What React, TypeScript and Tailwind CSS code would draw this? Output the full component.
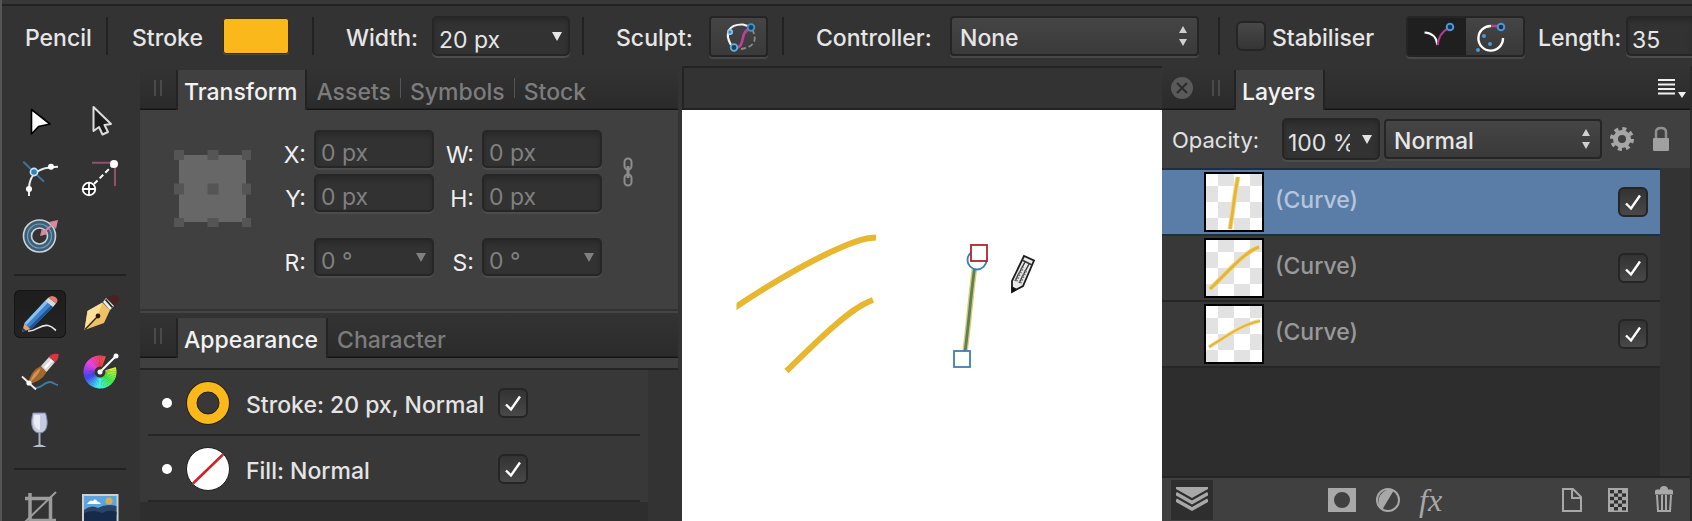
import type { ReactNode } from "react";

const fieldBox =
  "flex items-center rounded-[5px] border-2 border-[#262626] bg-[#323232] shadow-[0_2px_0_#4c4c4c,inset_0_3px_4px_#292929]";
const raisedBox =
  "rounded-[4px] border-2 border-[#252525] bg-linear-to-b from-[#454545] to-[#3a3a3a] shadow-[0_2px_0_#484848]";

function DownArrow() {
  return (
    <svg viewBox="0 0 10 9" className="h-[9px] w-[10px] shrink-0" aria-hidden="true">
      <path d="M0 0H10L5 9Z" fill="currentColor" />
    </svg>
  );
}

function Combo({ id, value, className }: { id: string; value: string; className: string }) {
  return (
    <div className={`${fieldBox} ${className}`}>
      <input id={id} defaultValue={value} className="min-w-0 flex-1 bg-transparent pt-2 outline-none" />
      <button type="button" aria-label="Choose value" className="shrink-0">
        <DownArrow />
      </button>
    </div>
  );
}

function Popup({ id, value, className, label }: { id: string; value: string; className: string; label?: string }) {
  return (
    <div className={`grid items-center ${raisedBox} ${className}`}>
      <select
        id={id}
        aria-label={label}
        className="col-start-1 row-start-1 h-full w-full appearance-none bg-transparent pt-1 pl-2 text-[#e6e6e6] outline-none"
      >
        <option>{value}</option>
      </select>
      <svg viewBox="0 0 8 20" className="pointer-events-none col-start-1 row-start-1 mr-[10px] h-5 w-2 justify-self-end" aria-hidden="true">
        <path d="M4 0L8 7H0ZM4 20L8 13H0Z" fill="#cfcfcf" />
      </svg>
    </div>
  );
}

function Tick({ id, label, checked }: { id: string; label?: string; checked: boolean }) {
  return (
    <span className="grid h-[30px] w-[30px] shrink-0">
      <input
        id={id}
        type="checkbox"
        aria-label={label}
        defaultChecked={checked}
        className="peer col-start-1 row-start-1 appearance-none rounded-[6px] border-2 border-[#252525] bg-linear-to-b from-[#484848] to-[#353535] checked:from-[#333333] checked:to-[#484848]"
      />
      <svg viewBox="0 0 30 30" className="pointer-events-none invisible col-start-1 row-start-1 peer-checked:visible" aria-hidden="true">
        <path d="M8 16.5L13 21.5L22 8.5" fill="none" stroke="#fff" strokeWidth="2.4" />
      </svg>
    </span>
  );
}

function Grip() {
  return <span className="block h-4 w-2 shrink-0 border-x-2 border-[#4a4a4a]" />;
}

function Tab({ active, children }: { active?: boolean; children: ReactNode }) {
  return active ? (
    <button
      type="button"
      role="tab"
      aria-selected="true"
      className="h-10 border-x-2 border-[#232323] bg-[#404040] pt-1 pr-2 pl-[6px] font-medium text-[#f2f2f2]"
    >
      {children}
    </button>
  ) : (
    <button type="button" role="tab" aria-selected="false" className="h-10 pt-1 font-medium text-[#7c7c7c]">
      {children}
    </button>
  );
}

function TabDivider() {
  return <span className="mx-[9px] mt-2 h-5 w-px self-start bg-[#555]" />;
}

function TabBar({ children }: { children: ReactNode }) {
  return (
    <div
      role="tablist"
      className="flex h-11 shrink-0 items-end bg-[linear-gradient(to_top,#151515_1px,#2b2b2b_2px,#333_100%)]"
    >
      {children}
    </div>
  );
}

function Tool({ label, active, children }: { label: string; active?: boolean; children: ReactNode }) {
  return (
    <button
      type="button"
      aria-label={label}
      className={`h-12 w-[52px] rounded-[6px] ${active ? "bg-linear-to-b from-[#1d1d1d] to-[#242424] shadow-[inset_0_0_0_1px_#161616]" : ""}`}
    >
      <svg viewBox="0 0 52 48" className="block h-12 w-[52px]" fill="none" aria-hidden="true">
        {children}
      </svg>
    </button>
  );
}

function ColourWheel() {
  const steps = Array.from({ length: 40 }, (_, i) => i);
  const sweep = 308 / steps.length;
  const point = (deg: number) => {
    const a = (deg * Math.PI) / 180;
    return `${26 + 11 * Math.cos(a)} ${24 + 11 * Math.sin(a)}`;
  };
  return (
    <>
      {steps.map((i) => {
        const start = i * sweep - 18;
        return (
          <path
            key={i}
            d={`M${point(start)}A11 11 0 0 1 ${point(start + sweep + 1)}`}
            stroke={`hsl(${70 + i * 7.6} 85% 60%)`}
            strokeWidth="11"
          />
        );
      })}
      <path d="M26 24L42 8" stroke="#fff" strokeWidth="2" />
      <circle cx="26" cy="24" r="2.5" fill="#fff" />
      <circle cx="42" cy="8" r="2.5" fill="#fff" />
    </>
  );
}

function Rail() {
  return (
    <nav aria-label="Tools" className="w-[140px] shrink-0 border-l-2 border-[#555] pt-[25px]">
      <div className="grid auto-rows-[58px] grid-cols-[60px_60px] place-items-center pl-2">
        <Tool label="Move">
          <path d="M17.5 13.5L36 28L24.5 30.5L17.5 38Z" fill="#fff" stroke="#000" strokeWidth="1.6" strokeLinejoin="round" />
        </Tool>
        <Tool label="Node select">
          <path d="M19.5 11V35L25 31L28.5 38.5L34 36L30.5 29L37 28Z" fill="#1c1c1c" stroke="#ddd" strokeWidth="2" strokeLinejoin="round" />
        </Tool>
        <Tool label="Node">
          <path d="M9.300 7.700L30 27.700" stroke="#3f7399" strokeWidth="2" />
          <path d="M15 42V35C15 22 22 12.700 44 12.700" stroke="#eee" strokeWidth="2" />
          <circle cx="15" cy="35" r="3" fill="#fff" />
          <circle cx="37" cy="12.700" r="3" fill="#fff" />
          <circle cx="20" cy="18" r="3.600" fill="#2d83bd" stroke="#cfe6f5" strokeWidth="1.600" />
        </Tool>
        <Tool label="Point transform">
          <path d="M18 8.700H41V32" stroke="#94506a" strokeWidth="2" />
          <path d="M20 30L38 12" stroke="#fff" strokeWidth="2" strokeDasharray="5 3" />
          <circle cx="40" cy="10" r="4" fill="#fff" />
          <circle cx="15" cy="35" r="6.300" fill="#222" stroke="#fff" strokeWidth="1.800" />
          <path d="M9 35H21M15 29V41" stroke="#fff" strokeWidth="1.800" />
        </Tool>
        <Tool label="Contour">
          <circle cx="25.500" cy="24" r="16" fill="#3d5f76" stroke="#ccd3d8" strokeWidth="1.600" />
          <circle cx="25.500" cy="24" r="12" stroke="#6fa0bd" strokeWidth="1.200" />
          <circle cx="25.500" cy="24" r="8" fill="#333" stroke="#ccd3d8" strokeWidth="1.600" />
          <path d="M30 20L39 12" stroke="#d8899d" strokeWidth="2" />
          <path d="M26 24L28 16L34 22ZM35 10L44 8L42 17Z" fill="#d8899d" />
        </Tool>
      </div>
      <hr className="my-[9px] mr-[14px] ml-3 h-[2px] border-0 bg-[#222]" />
      <div className="grid auto-rows-[58px] grid-cols-[60px_60px] place-items-center pl-2">
        <Tool label="Pencil" active>
          <path d="M14 41C22 42 26 34 34 35.500C39 36.500 41 40 42 40.500" stroke="#e8e8e8" strokeWidth="1.600" />
          <path d="M8 42L10.500 33L16.500 39Z" fill="#d9a777" />
          <path d="M8 42L9 38L12 40.500Z" fill="#1f3f66" />
          <path d="M10.500 33L31 11L39 17L17 39.500Z" fill="#3b82cf" />
          <path d="M10.500 33L31 11L33.500 13L12.500 35Z" fill="#8cc0ef" />
          <path d="M15 37.500L37 15.500L39 17L17 39.500Z" fill="#1e548f" />
          <path d="M31 11L34.500 7.500L42 13.500L39 17Z" fill="#d5dade" />
          <path d="M34.500 7.500Q38 4.500 42 7.500Q45 10.500 42 13.500Z" fill="#e47d70" />
        </Tool>
        <Tool label="Pen">
          <path d="M10.500 40L13.500 21L28.500 12.500L36 20L30 33Z" fill="#f0c067" />
          <path d="M10.500 40L13.500 21L28.500 12.500L23.500 26Z" fill="#fbdf9a" />
          <path d="M11 39.500L23 27" stroke="#3b2a14" strokeWidth="1.500" />
          <circle cx="24" cy="26" r="2.400" fill="#2a1d10" />
          <path d="M29 12L32 8L40 16L36 20Z" fill="#eee" />
          <path d="M31.500 9.500L38.500 17.500" stroke="#222" strokeWidth="1.800" />
          <path d="M33 8Q37 4 44 6Q47 11 40.500 15.500Z" fill="#4b211d" />
        </Tool>
        <Tool label="Vector brush">
          <path d="M20 40C27 41 30 34 36 34C40 34 41 37 44 37" stroke="#3d7ba5" strokeWidth="1.800" />
          <path d="M14 36Q17 22 27 18Q33 21 32 25Q27 34 14 36Z" fill="#a5662c" />
          <path d="M16 34Q19 24 27 20Q24 28 16 34Z" fill="#d1945a" />
          <path d="M27 18L35 9L41 14L32.500 24Z" fill="#d9d9d9" />
          <path d="M31 20L38 12" stroke="#fff" strokeWidth="2" />
          <path d="M35 9Q38 5 44.500 6Q45 11 41 14Z" fill="#dc3540" />
          <path d="M8 28.500L22 41.500" stroke="#eee" strokeWidth="1.800" />
          <circle cx="15" cy="35" r="2.600" fill="#fff" />
        </Tool>
        <Tool label="Fill">
          <ColourWheel />
        </Tool>
        <Tool label="Transparency">
          <path d="M19 7H31.500C35 18 33 27 25.500 27S16 18 19 7Z" fill="#c7cbe0" stroke="#8089a5" strokeWidth="1" />
          <path d="M20.500 9H26V24C21 23 18 17 20.500 9Z" fill="#e9ebf6" />
          <path d="M25.500 27V39" stroke="#a9b0c5" strokeWidth="2" />
          <path d="M18.500 41Q25.500 36 32.500 41Z" fill="#b9bfd1" />
        </Tool>
      </div>
      <hr className="my-[9px] mr-[14px] ml-3 h-[2px] border-0 bg-[#222]" />
      <div className="grid auto-rows-[58px] grid-cols-[60px_60px] place-items-center pl-2">
        <Tool label="Vector crop">
          <path d="M11 14.500H36.500V42M16 9V36.500H42" stroke="#9c9c9c" strokeWidth="3.500" />
          <path d="M11 38L42 8" stroke="#9c9c9c" strokeWidth="2" />
        </Tool>
        <Tool label="Place image">
          <path d="M9 11H43.500V38H9Z" fill="#5ba4dd" stroke="#cfcfcf" strokeWidth="2" />
          <path d="M10 26Q17 20 24 24Q32 19 42.500 22V31H10Z" fill="#2a4568" />
          <path d="M10 29Q20 25 28 29Q36 25 42.500 28V37H10Z" fill="#162b49" />
          <path d="M13 20Q16 15 19 17Q21 13 24 18Q26 18 27 20Z" fill="#fff" />
          <circle cx="35" cy="17" r="3.500" fill="#dcae4a" />
        </Tool>
      </div>
    </nav>
  );
}

function Section({ className, children }: { className: string; children: ReactNode }) {
  return <div className={`flex h-[38px] shrink-0 items-center border-[#222] ${className}`}>{children}</div>;
}

function ContextBar() {
  return (
    <header className="flex h-[66px] shrink-0 items-center border-l-2 border-[#555] bg-[linear-gradient(to_bottom,#383838_4px,#222_4px,#222_6px,#333_6px)] pt-[6px] text-[#e6e6e6]">
      <Section className="w-[106px] border-r-2 pl-[23px] font-medium"><span className="pt-1">Pencil</span></Section>
      <Section className="w-[206px] justify-between border-r-2 pr-[23px] pl-6">
        <span id="stroke-label" className="pt-1 font-medium">Stroke</span>
        <button
          type="button"
          aria-labelledby="stroke-label"
          className="h-9 w-[66px] rounded-[3px] border border-[#3a2c0c] bg-[#fbb81b] shadow-[0_1px_0_#4a4a4a]"
        />
      </Section>
      <Section className="w-[270px] justify-between border-r-2 pr-3 pl-8">
        <label htmlFor="width" className="pt-1 font-medium">Width:</label>
        <Combo id="width" value="20 px" className="h-10 w-[138px] pr-[6px] pl-[5px]" />
      </Section>
      <Section className="w-[200px] justify-between border-r-2 pr-[14px] pl-8">
        <span id="sculpt-label" className="pt-1 font-medium">Sculpt:</span>
        <button type="button" aria-labelledby="sculpt-label" className={`h-[41px] w-[59px] ${raisedBox}`}>
          <svg viewBox="0 0 55 37" className="block h-[37px] w-[55px]" fill="none" aria-hidden="true">
            <path d="M20 27C13 15 18 6 32 6.500L40 9" stroke="#f5f5f5" strokeWidth="2.200" />
            <path d="M41 11Q50 28 30 31" stroke="#8a8a8a" strokeWidth="1.800" strokeDasharray="5 3" />
            <path d="M24 30C36 29 27 14 40 10" stroke="#c03f9a" strokeWidth="2.600" />
            <circle cx="19" cy="14" r="2.300" fill="#3d87bd" stroke="#9bcbed" strokeWidth="1.400" />
            <circle cx="40" cy="9.500" r="3.300" fill="#17425f" stroke="#4a93c8" strokeWidth="1.800" />
            <circle cx="23" cy="29.500" r="3.300" fill="#17425f" stroke="#6aaad8" strokeWidth="1.800" />
          </svg>
        </button>
      </Section>
      <Section className="w-[436px] justify-between border-r-2 pr-[19px] pl-8">
        <label htmlFor="controller" className="pt-1 font-medium">Controller:</label>
        <Popup id="controller" value="None" className="h-10 w-[249px] font-medium" />
      </Section>
      <Section className="gap-[6px] pl-4">
        <Tick id="stabiliser" checked={false} />
        <label htmlFor="stabiliser" className="w-[134px] pt-1 font-medium">Stabiliser</label>
      </Section>
      <div className="flex h-[41px] shrink-0 overflow-hidden rounded-[4px] border-2 border-[#252525] bg-[#1f1f1f] shadow-[0_2px_0_#484848]">
        <button type="button" aria-label="Rope stabiliser" aria-pressed="true" className="w-[58px] bg-[#1f1f1f]">
          <svg viewBox="0 0 58 37" className="block h-[37px] w-[58px]" fill="none" aria-hidden="true">
            <path d="M16.500 14.500Q28 15 29.500 27" stroke="#fff" strokeWidth="2.200" />
            <path d="M29.500 27Q31 15 40 10.500" stroke="#b5388b" strokeWidth="2.200" />
            <circle cx="42" cy="9" r="3.300" fill="#16324a" stroke="#4e97cf" strokeWidth="2" />
          </svg>
        </button>
        <button type="button" aria-label="Window stabiliser" aria-pressed="false" className="w-[57px] bg-linear-to-b from-[#454545] to-[#383838]">
          <svg viewBox="0 0 57 37" className="block h-[37px] w-[57px]" fill="none" aria-hidden="true">
            <path d="M25 8A12.300 12.300 0 1 0 37 20" stroke="#fff" strokeWidth="2.400" />
            <path d="M25 8H32" stroke="#c03f9a" strokeWidth="2.400" />
            <circle cx="35" cy="9" r="3.300" fill="#16324a" stroke="#4e97cf" strokeWidth="2" />
            <circle cx="18" cy="18" r="2" fill="#4e97cf" />
            <circle cx="24" cy="26" r="2" fill="#4e97cf" />
            <circle cx="12" cy="32" r="2" fill="#4e97cf" />
          </svg>
        </button>
      </div>
      <div className="ml-[13px] flex min-w-0 flex-1 items-center">
        <label htmlFor="length" className="w-[88px] shrink-0 pt-1 font-medium">Length:</label>
        <div className={`h-10 min-w-0 flex-1 rounded-r-none border-r-0 pl-1 ${fieldBox}`}>
          <input id="length" defaultValue="35" className="w-full min-w-0 bg-transparent pt-2 outline-none" />
        </div>
      </div>
    </header>
  );
}

function NumberField({ id, label, value, combo }: { id: string; label: string; value: string; combo?: boolean }) {
  return (
    <>
      <label htmlFor={id} className="pt-3 text-right text-[#f0f0f0]">{label}</label>
      {combo ? (
        <Combo id={id} value={value} className="h-[38px] pr-[6px] pl-[5px] text-[#808080]" />
      ) : (
        <div className={`h-[38px] pl-[5px] ${fieldBox}`}>
          <input id={id} defaultValue={value} className="w-full bg-transparent pt-2 text-[#808080] outline-none" />
        </div>
      )}
    </>
  );
}

function TransformPanel() {
  const stops = [4, 38.5, 73];
  return (
    <section aria-label="Transform">
      <TabBar>
        <span className="flex w-9 justify-center self-center"><Grip /></span>
        <Tab active>Transform</Tab>
        <div className="ml-[9px] flex items-center">
          <Tab>Assets</Tab>
          <TabDivider />
          <Tab>Symbols</Tab>
          <TabDivider />
          <Tab>Stock</Tab>
        </div>
      </TabBar>
      <div className="flex h-[199px] bg-[#404040] pt-5 pl-[34px]">
        <svg viewBox="0 0 77 77" className="mt-5 h-[77px] w-[77px] shrink-0" aria-hidden="true">
          <path d="M5 5H72V72H5Z" fill="#676767" />
          {stops.map((x) =>
            stops.map((y) => <rect key={`${x}-${y}`} x={x - 5} y={y - 5} width="11" height="11" fill="#555" />),
          )}
        </svg>
        <div className="ml-[27px] grid grid-cols-[28px_120px_32px_120px] grid-rows-[38px_38px_14px_38px] content-start items-center gap-x-2 gap-y-[6px]">
          <NumberField id="tx" label="X:" value="0 px" />
          <NumberField id="tw" label="W:" value="0 px" />
          <NumberField id="ty" label="Y:" value="0 px" />
          <NumberField id="th" label="H:" value="0 px" />
          <span className="col-span-4" />
          <NumberField id="tr" label="R:" value="0 °" combo />
          <NumberField id="ts" label="S:" value="0 °" combo />
        </div>
        <button type="button" aria-label="Link dimensions" className="mt-[27px] ml-5 self-start">
          <svg viewBox="0 0 12 30" className="h-[30px] w-3" fill="none" stroke="#8c8c8c" strokeWidth="2" aria-hidden="true">
            <rect x="2.500" y="1.500" width="7" height="11" rx="3.500" />
            <rect x="2.500" y="17.500" width="7" height="11" rx="3.500" />
            <path d="M6 9V21" strokeWidth="3" />
          </svg>
        </button>
      </div>
    </section>
  );
}

function AppearanceRow({ id, text, children }: { id: string; text: string; children: ReactNode }) {
  return (
    <li className="mx-2 flex h-[66px] items-center border-b-2 border-[#262626] pt-[2px] pl-[14px]">
      <span className="h-[10px] w-[10px] rounded-full bg-white" />
      <svg viewBox="0 0 44 44" className="ml-[14px] h-11 w-11" aria-hidden="true">{children}</svg>
      <label htmlFor={id} className="ml-4 w-[252px] pt-1 font-medium whitespace-nowrap text-[#e4e4e4]">{text}</label>
      <Tick id={id} checked />
    </li>
  );
}

function AppearancePanel() {
  return (
    <section aria-label="Appearance" className="flex flex-1 flex-col border-t-2 border-[#333]">
      <div className="border-t-2 border-[#444]" />
      <div className="h-px bg-[#333]" />
      <TabBar>
        <span className="flex w-9 justify-center self-center"><Grip /></span>
        <Tab active>Appearance</Tab>
        <div className="ml-[9px]"><Tab>Character</Tab></div>
      </TabBar>
      <div className="h-3 shrink-0 border-b-2 border-[#242424] bg-[#404040]" />
      <div className="flex flex-1 bg-[#333]">
        <div className="mr-[30px] flex flex-1 flex-col bg-[#2e2e2e]">
          <ul className="bg-[#383838]">
            <AppearanceRow id="stroke-on" text="Stroke: 20 px, Normal">
              <circle cx="22" cy="22" r="22" fill="#2a2213" />
              <circle cx="22" cy="22" r="16" fill="none" stroke="#fbb81b" strokeWidth="10" />
              <circle cx="22" cy="22" r="11" fill="#383838" stroke="#2a2213" strokeWidth="1" />
            </AppearanceRow>
            <AppearanceRow id="fill-on" text="Fill: Normal">
              <circle cx="22" cy="22" r="21.500" fill="#fff" stroke="#1c1c1c" strokeWidth="1" />
              <path d="M7 36.500L37 7.500" stroke="#cc2229" strokeWidth="2.500" />
            </AppearanceRow>
          </ul>
        </div>
      </div>
    </section>
  );
}

function Canvas() {
  return (
    <main className="flex min-w-0 flex-1 flex-col">
      <div className="h-11 shrink-0 border-2 border-r-0 border-[#232323] bg-[#333]" />
      <div className="flex-1 overflow-hidden bg-white">
        <svg viewBox="0 0 480 411" className="block h-[411px] w-[480px]" fill="none" role="img" aria-label="Pencil strokes">
          <clipPath id="strokes"><path d="M54.500 100H194V280H54.500Z" /></clipPath>
          <g stroke="#e8b730" strokeWidth="6" clipPath="url(#strokes)">
            <path d="M50 199.500C88 174 127 152 151 141S184 127.500 198 127.500" />
            <path d="M104.500 261C121 245 136 230 151 217S178 194.500 191 190" />
          </g>
          <path d="M293 155C289 182 287 212 283 242" stroke="#e3cb57" strokeWidth="5.500" />
          <path d="M293 155C289 182 287 212 283 242" stroke="#55806f" strokeWidth="2.800" />
          <circle cx="295" cy="150" r="9.500" stroke="#3b80b8" strokeWidth="1.800" fill="#fff" />
          <rect x="289" y="135" width="16" height="16" fill="#fff" stroke="#b3232b" strokeWidth="1.800" />
          <rect x="272" y="241" width="16" height="16" fill="#fff" stroke="#3b80b8" strokeWidth="1.800" />
          <path d="M330 182L330 171L342 146L352 150.500L341 176Z" fill="#e9e9e9" stroke="#1c1c1c" strokeWidth="1.800" />
          <path d="M340 150L350 155M333 171L343 152M337 173L347 154" stroke="#333" strokeWidth="1.400" />
          <path d="M334 171L341 157M338 173L344 160" stroke="#777" strokeWidth="3" strokeDasharray="1.500 1.500" />
          <path d="M329.500 183V176L335 179Z" fill="#111" />
        </svg>
      </div>
    </main>
  );
}

function LayerRow({ id, selected, d, width }: { id: string; selected?: boolean; d: string; width: number }) {
  const cells = [0, 1, 2, 3].flatMap((r) => [0, 1, 2, 3].filter((c) => (r + c) % 2 === 1).map((c) => [c, r]));
  return (
    <li
      className={`flex h-[66px] items-center border-b-2 pr-3 pl-[42px] ${
        selected ? "border-[#1f2e40] bg-[#5a7da8] text-[#b4c5dc]" : "border-[#262626] bg-[#383838] text-[#999]"
      }`}
    >
      <svg viewBox="0 0 60 60" className="h-[60px] w-[60px] shrink-0" fill="none" aria-hidden="true">
        <path d="M0 0H60V60H0Z" fill="#fff" />
        {cells.map(([c, r]) => (
          <rect key={`${c}-${r}`} x={c * 16 - 2} y={r * 16 - 2} width="16" height="16" fill="#e2e2e2" />
        ))}
        <path d={d} stroke="#f6dc94" strokeWidth={width + 2} />
        <path d={d} stroke="#e3b53b" strokeWidth={width} />
        <path d="M1 1H59V59H1Z" stroke="#000" strokeWidth="2" />
      </svg>
      <label htmlFor={id} className="ml-[11px] flex-1 pb-1 font-medium">(Curve)</label>
      <Tick id={id} checked />
    </li>
  );
}

function FootButton({ label, className, children }: { label: string; className: string; children: ReactNode }) {
  return (
    <button type="button" aria-label={label} className={`shrink-0 ${className}`}>
      <svg viewBox="0 0 28 28" className="h-7 w-7" fill="none" aria-hidden="true">{children}</svg>
    </button>
  );
}

function LayersPanel() {
  const squares = [0, 1, 2, 3, 4, 5].flatMap((r) => [0, 1, 2, 3].filter((c) => (r + c) % 2 === 0).map((c) => [c, r]));
  return (
    <aside className="flex w-[530px] shrink-0 flex-col border-r-2 border-[#2a2a2a] bg-[#333]">
      <TabBar>
        <button type="button" aria-label="Close panel" className="ml-[9px] self-center">
          <svg viewBox="0 0 22 22" className="block h-[22px] w-[22px]" aria-hidden="true">
            <circle cx="11" cy="11" r="11" fill="#5a5a5a" />
            <path d="M6 6L16 16M16 6L6 16" stroke="#2b2b2b" strokeWidth="2" />
          </svg>
        </button>
        <span className="mr-[14px] ml-[19px] self-center"><Grip /></span>
        <Tab active>Layers</Tab>
        <button type="button" aria-label="Panel menu" className="mr-1 ml-auto self-center">
          <svg viewBox="0 0 28 20" className="block h-5 w-7" aria-hidden="true">
            <path d="M0 2H17M0 6.500H17M0 11H17M0 15.500H17" stroke="#f0f0f0" strokeWidth="2" />
            <path d="M20 14H28L24 20Z" fill="#f0f0f0" />
          </svg>
        </button>
      </TabBar>
      <div className="flex h-[58px] shrink-0 items-center bg-[#404040] pl-[10px] text-[#e2e2e2]">
        <label htmlFor="opacity" className="w-[110px] pt-[2px] text-[22px]">Opacity:</label>
        <Combo id="opacity" value="100 %" className="h-[42px] w-[98px] gap-3 pr-[6px] pl-1" />
        <Popup id="blend" label="Blend mode" value="Normal" className="ml-1 h-10 w-[218px] font-medium" />
        <button type="button" aria-label="Blend options" className="ml-2">
          <svg viewBox="0 0 24 24" className="h-6 w-6" fill="none" aria-hidden="true">
            <circle cx="12" cy="12" r="6.500" stroke="#a6a6a6" strokeWidth="5" />
            <circle cx="12" cy="12" r="10" stroke="#a6a6a6" strokeWidth="4" strokeDasharray="3.927 3.927" />
          </svg>
        </button>
        <button type="button" aria-label="Lock layer" className="ml-[18px]">
          <svg viewBox="0 0 18 26" className="h-[26px] w-[18px]" fill="none" aria-hidden="true">
            <path d="M4 13V6Q4 2 9 2T14 6V13" stroke="#8f8f8f" strokeWidth="2.500" />
            <rect x="1" y="12" width="16" height="13" rx="1" fill="#a0a0a0" />
          </svg>
        </button>
      </div>
      <div className="mr-[30px] flex flex-1 flex-col bg-[#2d2d2d]">
        <ul className="border-t-2 border-[#1f2e40]">
          <LayerRow id="layer-1" selected d="M34 5C31 20 29 38 26 57" width={3} />
          <LayerRow id="layer-2" d="M6 51C20 38 40 14 55 9" width={3} />
          <LayerRow id="layer-3" d="M5 43C20 34 38 20 56 17" width={2} />
        </ul>
      </div>
      <footer className="flex h-[45px] shrink-0 items-center border-t-2 border-[#242424] bg-[#404040] pr-3 pl-[9px]">
        <button type="button" aria-label="Layer stack" className="bg-[#2e2e2e] p-[5px]">
          <svg viewBox="0 0 32 30" className="h-[30px] w-8" fill="none" aria-hidden="true">
            <path d="M0 2H32V4L16 13L0 4Z" fill="#a8a8a8" />
            <path d="M0 8.500L16 17.500L32 8.500M0 15L16 24L32 15" stroke="#a8a8a8" strokeWidth="3.500" />
          </svg>
        </button>
        <FootButton label="Mask layer" className="ml-[115px]">
          <path d="M0 2H28V26H0ZM14 6A8 8 0 1 0 14 22A8 8 0 1 0 14 6Z" fill="#a8a8a8" fillRule="evenodd" />
        </FootButton>
        <FootButton label="Adjustments" className="ml-[18px]">
          <circle cx="14" cy="14" r="11" stroke="#a8a8a8" strokeWidth="2" />
          <path d="M20 4L8 24A12 12 0 0 1 20 4Z" fill="#a8a8a8" />
        </FootButton>
        <button
          type="button"
          aria-label="Layer effects"
          className="ml-[17px] font-['Liberation_Serif',serif] text-[32px] leading-7 text-[#a8a8a8] italic"
        >
          fx
        </button>
        <div className="ml-auto flex gap-[18px]">
          <FootButton label="Add layer" className="">
            <path d="M5 3H15L23 11V25H5ZM14 3V12H23" stroke="#a8a8a8" strokeWidth="2" />
          </FootButton>
          <FootButton label="Add pixel layer" className="">
            <path d="M4 2H24V26H4Z" fill="#a8a8a8" />
            {squares.map(([c, r]) => (
              <rect key={`${c}-${r}`} x={6 + c * 4} y={4 + r * 3.4} width="4" height="3.400" fill="#303030" />
            ))}
          </FootButton>
          <FootButton label="Delete layer" className="">
            <path d="M5 8.500H23V5Q23 3.500 21 3.500H18Q18 0 14 0T10 3.500H7Q5 3.500 5 5Z" fill="#a8a8a8" />
            <path d="M7 9L8 25H20L21 9M12 9V25M16 9V25" stroke="#a8a8a8" strokeWidth="2" />
          </FootButton>
        </div>
      </footer>
    </aside>
  );
}

export default function App() {
  return (
    <div className="flex h-screen flex-col overflow-hidden bg-[#333] font-['Inter','Liberation_Sans',sans-serif] text-[23px] leading-7">
      <ContextBar />
      <div className="flex min-h-0 flex-1">
        <Rail />
        <div className="mr-1 flex w-[538px] shrink-0 flex-col">
          <TransformPanel />
          <AppearancePanel />
        </div>
        <Canvas />
        <LayersPanel />
      </div>
    </div>
  );
}
